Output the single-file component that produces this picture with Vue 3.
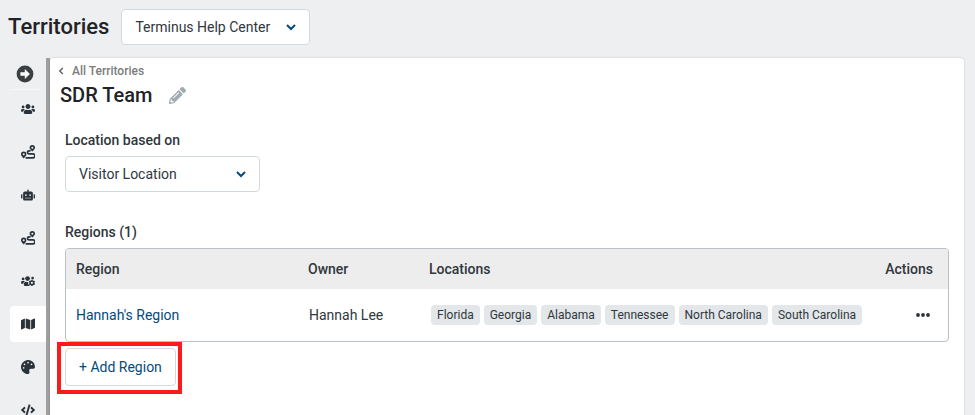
<script setup>
import { ref } from 'vue'

const workspace = ref('Terminus Help Center')
const locationBasis = ref('Visitor Location')

const navItems = [
  { id: 'audiences', label: 'Audiences', icon: 'users' },
  { id: 'journeys', label: 'Journeys', icon: 'route' },
  { id: 'bots', label: 'Bots', icon: 'robot' },
  { id: 'routing', label: 'Routing', icon: 'route' },
  { id: 'team', label: 'Team settings', icon: 'usersCog' },
  { id: 'territories', label: 'Territories', icon: 'map', active: true },
  { id: 'appearance', label: 'Appearance', icon: 'palette' },
  { id: 'code', label: 'Install code', icon: 'code' },
]

const icons = {
  users: {
    box: '0 0 640 512',
    d: 'M96 224c35.3 0 64-28.7 64-64s-28.7-64-64-64-64 28.7-64 64 28.7 64 64 64zm448 0c35.3 0 64-28.7 64-64s-28.7-64-64-64-64 28.7-64 64 28.7 64 64 64zm32 32h-64c-17.6 0-33.5 7.1-45.1 18.6 40.3 22.1 68.9 62 75.1 109.4h66c17.7 0 32-14.3 32-32v-32c0-35.3-28.7-64-64-64zm-256 0c61.9 0 112-50.1 112-112S381.9 32 320 32 208 82.1 208 144s50.1 112 112 112zm76.8 32h-8.3c-20.8 10-43.9 16-68.5 16s-47.6-6-68.5-16h-8.3C179.6 288 128 339.6 128 403.2V432c0 26.5 21.5 48 48 48h288c26.5 0 48-21.5 48-48v-28.8c0-63.6-51.6-115.2-115.2-115.2zm-223.7-13.4C161.5 263.1 145.6 256 128 256H64c-35.3 0-64 28.7-64 64v32c0 17.7 14.3 32 32 32h65.9c6.3-47.4 34.9-87.3 75.2-109.4z',
  },
  robot: {
    box: '0 0 640 512',
    d: 'M32 224H64V416H32A32 32 0 0 1 0 384V256A32 32 0 0 1 32 224Zm512-48V448a64 64 0 0 1-64 64H160a64 64 0 0 1-64-64V176a80 80 0 0 1 80-80H288V32a32 32 0 0 1 64 0V96H464A80 80 0 0 1 544 176ZM264 256a40 40 0 1 0-40 40A40 40 0 0 0 264 256Zm-8 128H192v32h64Zm96 0H288v32h64ZM456 256a40 40 0 1 0-40 40A40 40 0 0 0 456 256Zm-8 128H384v32h64ZM640 256V384a32 32 0 0 1-32 32H576V224h32A32 32 0 0 1 640 256Z',
  },
  map: {
    box: '0 0 576 512',
    d: 'M0 117.7v346.3c0 11.3 11.4 19.1 21.9 14.9L160 416V32L20.1 87.9A32 32 0 0 0 0 117.7zM192 416l192 64V96L192 32v384zM554.1 33.2L416 96v384l139.9-55.9A32 32 0 0 0 576 394.3V48c0-11.3-11.4-19.1-21.9-14.9z',
  },
  palette: {
    box: '0 0 512 512',
    d: 'M204.3 5C104.9 24.4 24.8 104.3 5.2 203.4c-37 187 131.7 326.4 258.8 306.7 41.2-6.4 61.4-54.6 42.5-91.7-23.1-45.4 9.9-98.4 60.9-98.4h79.7c35.8 0 64.8-29.6 64.9-65.3C511.5 97.1 368.1-26.9 204.3 5zM96 320c-17.7 0-32-14.3-32-32s14.3-32 32-32 32 14.3 32 32-14.3 32-32 32zm32-128c-17.7 0-32-14.3-32-32s14.3-32 32-32 32 14.3 32 32-14.3 32-32 32zm128-64c-17.7 0-32-14.3-32-32s14.3-32 32-32 32 14.3 32 32-14.3 32-32 32zm128 64c-17.7 0-32-14.3-32-32s14.3-32 32-32 32 14.3 32 32-14.3 32-32 32z',
  },
  code: {
    box: '0 0 640 512',
    d: 'M278.9 511.5l-61-17.7c-6.4-1.8-10-8.5-8.2-14.9L346.2 8.7c1.8-6.4 8.5-10 14.9-8.2l61 17.7c6.4 1.8 10 8.5 8.2 14.9L293.8 503.3c-1.9 6.4-8.5 10.1-14.9 8.2zm-114-112.2l43.5-46.4c4.6-4.9 4.3-12.7-.8-17.2L117 256l90.6-79.7c5.1-4.5 5.5-12.3.8-17.2l-43.5-46.4c-4.5-4.8-12.1-5.1-17-.5L3.8 247.2c-5.1 4.7-5.1 12.8 0 17.5l144.1 135.1c4.9 4.6 12.5 4.4 17-.5zm327.2.6l144.1-135.1c5.1-4.7 5.1-12.8 0-17.5L492.1 112.1c-4.8-4.5-12.4-4.3-17 .5L431.6 159c-4.6 4.9-4.3 12.7.8 17.2L523 256l-90.6 79.7c-5.1 4.5-5.5 12.3-.8 17.2l43.5 46.4c4.5 4.9 12.1 5.1 17 .6z',
  },
}

const regions = [
  {
    name: "Hannah's Region",
    owner: 'Hannah Lee',
    locations: ['Florida', 'Georgia', 'Alabama', 'Tennessee', 'North Carolina', 'South Carolina'],
  },
]
</script>

<template>
  <div class="app">
    <header class="topbar">
      <h1 class="page-title">Territories</h1>
      <div class="select workspace-select">
        <select v-model="workspace" aria-label="Workspace">
          <option>Terminus Help Center</option>
        </select>
        <svg class="chevron" viewBox="0 0 10 7" aria-hidden="true"><path d="M1 1 5 5l4-4" /></svg>
      </div>
    </header>

    <div class="body">
      <nav class="sidebar" aria-label="Main">
        <button class="expand" type="button" aria-label="Expand menu">
          <svg viewBox="0 0 18 18" aria-hidden="true">
            <circle cx="9" cy="9" r="8.4" fill="#3c3f42" />
            <path d="M4.400 7.300h4.400V4.100L13.900 9l-5.100 4.900v-3.200H4.400z" fill="#fff" />
          </svg>
        </button>
        <ul class="nav-list">
          <li v-for="item in navItems" :key="item.id">
            <a href="#" class="nav-link" :class="{ active: item.active }" :aria-label="item.label">
              <svg v-if="item.icon === 'route'" viewBox="0 0 14 14" aria-hidden="true">
                <path fill-rule="evenodd" d="M2.700 13.400C.7 11.200 0 10.300 0 9.200a2.700 2.700 0 0 1 5.400 0c0 1.100-.7 2-2.700 4.200zM2.700 8.200a1 1 0 1 0 0 2 1 1 0 0 0 0-2z" />
                <path fill-rule="evenodd" d="M11.300 6.400C9.300 4.400 8.600 3.700 8.600 2.700a2.700 2.700 0 0 1 5.400 0c0 1-.7 1.700-2.700 3.700zM11.300 1.700a1 1 0 1 0 0 2 1 1 0 0 0 0-2z" />
                <path class="road" d="M9.600 5.800H8a1.500 1.500 0 0 0 0 3.100h4a1.900 1.900 0 0 1 0 3.900H4.600" />
              </svg>
              <svg v-else-if="item.icon === 'usersCog'" viewBox="0 0 640 512" aria-hidden="true">
                <circle cx="96" cy="160" r="64" />
                <circle cx="300" cy="144" r="108" />
                <circle cx="530" cy="120" r="62" />
                <path d="M173 275c-12-12-28-19-45-19H64c-35 0-64 29-64 64v32c0 18 14 32 32 32h66c6-47 35-87 75-109z" />
                <path d="M330 300c-50 12-80 0-98-12-60 0-104 52-104 115v29c0 26 21 48 48 48h240c-70-40-110-110-86-180z" />
                <circle class="gear-ring" cx="498" cy="340" r="88" />
                <path class="gear-teeth" d="M498 195v50M498 435v50M373 268l43 25M580 387l43 25M373 412l43-25M580 293l43-25" />
              </svg>
              <svg v-else :viewBox="icons[item.icon].box" aria-hidden="true">
                <path :d="icons[item.icon].d" />
              </svg>
            </a>
          </li>
        </ul>
      </nav>

      <main class="panel">
        <a href="#" class="back">
          <svg viewBox="0 0 6 8" aria-hidden="true"><path d="M4.800 1 1.800 4l3 3" /></svg>
          All Territories
        </a>
        <div class="title-row">
          <h2>SDR Team</h2>
          <button class="edit" type="button" aria-label="Edit name">
            <svg viewBox="0 0 512 512" aria-hidden="true">
              <path d="M497.9 142.1l-46.1 46.1c-4.7 4.7-12.3 4.7-17 0l-111-111c-4.7-4.7-4.7-12.3 0-17l46.1-46.1c18.7-18.7 49.1-18.7 67.9 0l60.1 60.1c18.8 18.7 18.8 49.1 0 67.9zM284.2 99.8L21.6 362.4.4 483.9c-2.9 16.4 11.4 30.6 27.8 27.8l121.5-21.3 262.6-262.6c4.7-4.7 4.7-12.3 0-17l-111-111c-4.8-4.7-12.4-4.7-17.1 0zM124.1 339.9c-5.500-5.500-5.500-14.300 0-19.800l154-154c5.500-5.500 14.300-5.500 19.800 0s5.500 14.300 0 19.800l-154 154c-5.500 5.500-14.300 5.500-19.800 0zM88 424h48v36.300l-64.500 11.300-31.100-31.100L51.700 376H88v48z" />
            </svg>
          </button>
        </div>

        <div class="content">
          <label class="field-label" for="basis">Location based on</label>
          <div class="select basis-select">
            <select id="basis" v-model="locationBasis">
              <option>Visitor Location</option>
            </select>
            <svg class="chevron" viewBox="0 0 10 7" aria-hidden="true"><path d="M1 1 5 5l4-4" /></svg>
          </div>

          <h3 id="regions-title" class="field-label regions-title">Regions ({{ regions.length }})</h3>
          <div class="table-frame">
            <table aria-labelledby="regions-title">
              <thead>
                <tr>
                  <th class="col-region">Region</th>
                  <th class="col-owner">Owner</th>
                  <th>Locations</th>
                  <th class="col-actions">Actions</th>
                </tr>
              </thead>
              <tbody>
                <tr v-for="region in regions" :key="region.name">
                  <td><a href="#" class="region-link">{{ region.name }}</a></td>
                  <td class="owner">{{ region.owner }}</td>
                  <td>
                    <div class="tags">
                      <span v-for="place in region.locations" :key="place" class="tag">{{ place }}</span>
                    </div>
                  </td>
                  <td class="col-actions">
                    <button class="more" type="button" aria-label="Region actions">
                      <svg viewBox="0 0 14 4" aria-hidden="true">
                        <circle cx="2" cy="2" r="1.900" /><circle cx="7" cy="2" r="1.900" /><circle cx="12" cy="2" r="1.900" />
                      </svg>
                    </button>
                  </td>
                </tr>
              </tbody>
            </table>
          </div>
        </div>

        <div class="highlight">
          <button class="add-region" type="button">+ Add Region</button>
        </div>
      </main>
    </div>
  </div>
</template>

<style>
html,
body {
  margin: 0;
  height: 100%;
  overflow: hidden;
  background: #eeeff1;
}
#app {
  height: 100%;
}
</style>

<style scoped>
.app {
  display: flex;
  flex-direction: column;
  height: 100%;
  font-family: Roboto, "Liberation Sans", sans-serif;
  font-size: 14px;
  line-height: 20px;
  color: #30373d;
}
button {
  padding: 0;
  border: 0;
  background: none;
  font: inherit;
  color: inherit;
  cursor: pointer;
}
a {
  text-decoration: none;
}
svg {
  display: block;
}
.topbar {
  display: flex;
  align-items: center;
  gap: 12px;
  height: 54px;
  padding: 0 8px;
  flex: none;
}
.page-title {
  margin: 0;
  font-size: 22px;
  line-height: 28px;
  font-weight: 500;
  color: #212326;
}
.select {
  position: relative;
}
.select select {
  appearance: none;
  display: block;
  width: 100%;
  height: 36px;
  padding: 0 32px 0 13px;
  border: 1px solid #d3dadd;
  border-radius: 4px;
  background: #fff;
  font: inherit;
  color: inherit;
}
.chevron {
  position: absolute;
  right: 14px;
  top: 15px;
  width: 10px;
  height: 7px;
  fill: none;
  stroke: #054b7c;
  stroke-width: 2;
  pointer-events: none;
}
.workspace-select {
  width: 189px;
}
.basis-select {
  width: 195px;
}
.body {
  display: flex;
  flex: 1;
  min-height: 0;
  padding: 4px 11px 0 0;
}
.sidebar {
  flex: none;
  width: 36px;
  padding-left: 10px;
  border-right: 4px solid #9f9f9f;
  overflow: hidden;
}
.expand {
  display: block;
  width: 31px;
  height: 32px;
  border-bottom: 1px solid #f5f6f7;
}
.expand svg {
  width: 18px;
  height: 18px;
  margin-left: 6px;
}
.nav-list {
  display: flex;
  flex-direction: column;
  gap: 7px;
  margin: 1px 0 0;
  padding: 0;
  list-style: none;
}
.nav-link {
  display: flex;
  align-items: center;
  justify-content: center;
  height: 36px;
  border-radius: 4px 0 0 4px;
}
.nav-link.active {
  background: #fff;
}
.nav-link svg {
  width: 14px;
  height: 14px;
  fill: #2b333a;
}
.nav-link .road,
.nav-link .gear-ring,
.nav-link .gear-teeth {
  fill: none;
  stroke: #2b333a;
}
.nav-link .road {
  stroke-width: 1.700;
}
.nav-link .gear-ring {
  stroke-width: 70;
  fill: #eeeff1;
}
.nav-link .gear-teeth {
  stroke-width: 56;
}
.panel {
  flex: 1;
  min-width: 0;
  background: #fff;
  border-radius: 4px 4px 0 0;
  box-shadow: 0 0 2px rgba(0, 0, 0, 0.2);
}
.back {
  display: flex;
  align-items: center;
  gap: 8px;
  width: max-content;
  padding: 5px 8px 0;
  font-size: 12px;
  font-weight: 500;
  line-height: 16px;
  color: #7c7c7c;
}
.back svg {
  width: 6px;
  height: 8px;
  fill: none;
  stroke: #606468;
  stroke-width: 1.500;
}
.title-row {
  display: flex;
  align-items: center;
  gap: 17px;
  padding: 2px 10px 0;
}
h2 {
  margin: 0;
  font-size: 20px;
  line-height: 28px;
  font-weight: 500;
  color: #212326;
}
.edit svg {
  width: 17px;
  height: 17px;
  fill: #9fabb1;
}
.content {
  padding: 21px 15px 0;
}
.field-label {
  display: block;
  margin: 0 0 6px;
  font-size: 14px;
  font-weight: 500;
  line-height: 20px;
}
.regions-title {
  margin-top: 30px;
}
.table-frame {
  border: 1px solid #b7c1c6;
  border-radius: 4px;
  overflow: hidden;
}
table {
  width: 100%;
  border-collapse: collapse;
  table-layout: fixed;
}
th {
  height: 40px;
  padding: 0;
  background: #ededed;
  font-weight: 500;
  text-align: left;
}
td {
  height: 52px;
  padding: 0;
}
th:first-child,
td:first-child {
  padding-left: 10px;
}
.col-region {
  width: 232px;
}
.col-owner {
  width: 121px;
}
.col-actions {
  width: 72px;
  padding-right: 15px;
  text-align: right;
}
.owner {
  padding-left: 1px;
}
.region-link {
  color: #054b7c;
}
.tags {
  display: flex;
  gap: 4px;
  padding-left: 2px;
}
.tag {
  padding: 0 6px;
  border-radius: 4px;
  background: #e3e7ea;
  font-size: 12px;
  line-height: 20px;
  white-space: nowrap;
}
.more {
  display: block;
  margin-left: auto;
  padding: 8px 3px;
}
.more svg {
  width: 14px;
  height: 4px;
  fill: #2b333a;
}
.highlight {
  width: max-content;
  margin-left: 7px;
  padding: 2px 2px 4px 4px;
  border: 4px solid #fc1a1c;
}
.add-region {
  display: block;
  height: 38px;
  padding: 0 13px;
  border: 1px solid #d3dadd;
  border-radius: 4px;
  color: #054b7c;
}
</style>
